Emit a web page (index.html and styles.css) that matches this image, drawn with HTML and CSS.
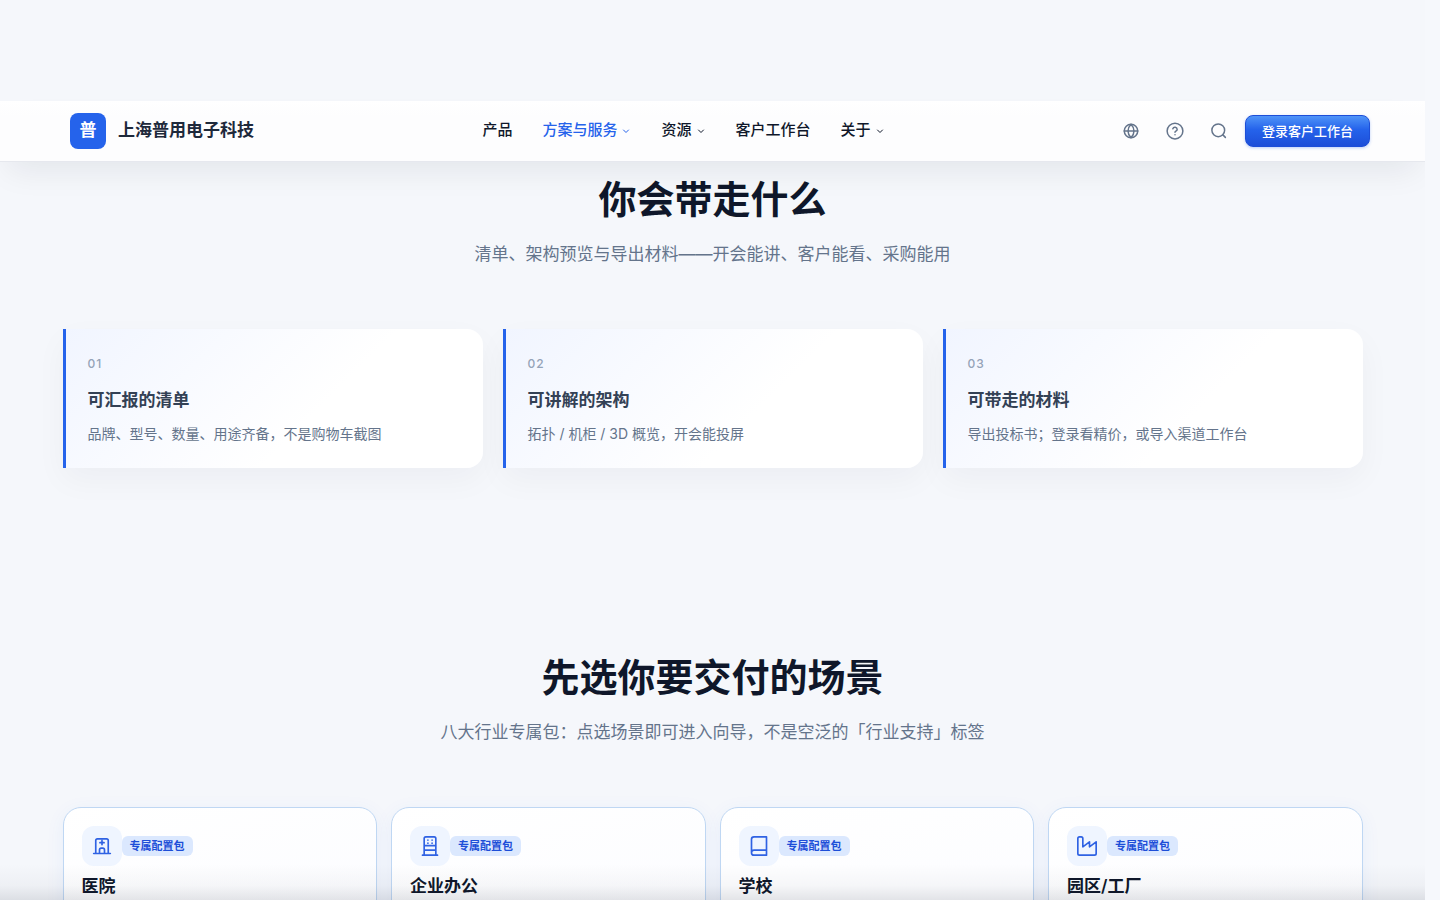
FILE: index.html
```html
<!DOCTYPE html>
<html lang="zh-CN">
<head>
    <meta charset="UTF-8">
    <meta name="viewport" content="width=device-width, initial-scale=1.0">
    <title>上海普用电子科技</title>
    <link rel="stylesheet" href="styles.css">
</head>
<body>
    <div class="page">
        <header class="site-header">
            <a class="brand" href="#">
                <span class="brand-mark">普</span>
                <span class="brand-name">上海普用电子科技</span>
            </a>
            <nav class="main-nav">
                <a href="#">产品</a>
                <a href="#" class="active">方案与服务
                    <svg class="chevron" viewBox="0 0 10 10"><path d="M2.5 4l2.5 2.5L7.500 4"/></svg>
                </a>
                <a href="#">资源
                    <svg class="chevron" viewBox="0 0 10 10"><path d="M2.5 4l2.5 2.5L7.500 4"/></svg>
                </a>
                <a href="#">客户工作台</a>
                <a href="#">关于
                    <svg class="chevron" viewBox="0 0 10 10"><path d="M2.5 4l2.5 2.5L7.500 4"/></svg>
                </a>
            </nav>
            <div class="header-actions">
                <button class="icon-btn" aria-label="语言">
                    <svg width="18" height="18" viewBox="0 0 24 24"><circle cx="12" cy="12" r="9"/><path d="M3 12h18M12 3c2.600 2.700 4 5.700 4 9s-1.400 6.300-4 9c-2.600-2.700-4-5.700-4-9s1.400-6.300 4-9z"/></svg>
                </button>
                <button class="icon-btn" aria-label="帮助">
                    <svg width="18" height="18" viewBox="0 0 24 24"><circle cx="12" cy="12" r="10.500"/><path d="M9.100 9a3 3 0 0 1 5.800 1c0 2-2.900 2.200-2.900 3.500M12 17v.1"/></svg>
                </button>
                <button class="icon-btn" aria-label="搜索">
                    <svg width="18" height="18" viewBox="0 0 24 24"><circle cx="11" cy="11" r="8.500"/><path d="M17.200 17.200L20.500 20.500"/></svg>
                </button>
                <button class="login-btn">登录客户工作台</button>
            </div>
        </header>

        <main>
            <section class="section takeaways">
                <h2>你会带走什么</h2>
                <p class="lead">清单、架构预览与导出材料——开会能讲、客户能看、采购能用</p>
                <div class="step-grid">
                    <article class="step-card">
                        <span class="step-no">01</span>
                        <h3>可汇报的清单</h3>
                        <p>品牌、型号、数量、用途齐备，不是购物车截图</p>
                    </article>
                    <article class="step-card">
                        <span class="step-no">02</span>
                        <h3>可讲解的架构</h3>
                        <p>拓扑 / 机柜 / 3D 概览，开会能投屏</p>
                    </article>
                    <article class="step-card">
                        <span class="step-no">03</span>
                        <h3>可带走的材料</h3>
                        <p>导出投标书；登录看精价，或导入渠道工作台</p>
                    </article>
                </div>
            </section>

            <section class="section scenes">
                <h2>先选你要交付的场景</h2>
                <p class="lead">八大行业专属包：点选场景即可进入向导，不是空泛的「行业支持」标签</p>
                <div class="scene-grid">
                    <a class="scene-card" href="#">
                        <div class="scene-top">
                            <span class="scene-icon">
                                <svg viewBox="0 0 24 24"><path d="M2 21h20M4.500 21V5.500a2 2 0 0 1 2-2h11a2 2 0 0 1 2 2V21M9 21v-4.500a2 2 0 0 1 2-2h2a2 2 0 0 1 2 2V21M12 5.500v5M9.500 8h5"/></svg>
                            </span>
                            <span class="tag">专属配置包</span>
                        </div>
                        <h3>医院</h3>
                    </a>
                    <a class="scene-card" href="#">
                        <div class="scene-top">
                            <span class="scene-icon">
                                <svg viewBox="0 0 24 24"><path d="M3 23h18M5 23V3a2 2 0 0 1 2-2h10a2 2 0 0 1 2 2v20M5 11.500h14M5 17h14M9.500 5v.1M14.500 5v.1M9.500 8.500v.1M14.500 8.500v.1"/></svg>
                            </span>
                            <span class="tag">专属配置包</span>
                        </div>
                        <h3>企业办公</h3>
                    </a>
                    <a class="scene-card" href="#">
                        <div class="scene-top">
                            <span class="scene-icon">
                                <svg viewBox="0 0 24 24"><path d="M3 20V4a3 3 0 0 1 3-3h15v22H6a3 3 0 0 1 0-6h15"/></svg>
                            </span>
                            <span class="tag">专属配置包</span>
                        </div>
                        <h3>学校</h3>
                    </a>
                    <a class="scene-card" href="#">
                        <div class="scene-top">
                            <span class="scene-icon">
                                <svg viewBox="0 0 24 24"><path d="M1 21a2 2 0 0 0 2 2h18a2 2 0 0 0 2-2V7l-8 6V7l-8 6V3a2 2 0 0 0-2-2H3a2 2 0 0 0-2 2z"/></svg>
                            </span>
                            <span class="tag">专属配置包</span>
                        </div>
                        <h3>园区/工厂</h3>
                    </a>
                </div>
            </section>
        </main>
        <div class="bottom-shade"></div>
    </div>
</body>
</html>
```
FILE: styles.css
```css
* {
    box-sizing: border-box;
}

body {
    margin: 0;
    font-family: Inter, "Noto Sans CJK SC", sans-serif;
    background-color: #f6f8fc;
    color: #0f172a;
}

a {
    color: inherit;
    text-decoration: none;
}

h2, h3, p {
    margin: 0;
}

svg {
    fill: none;
    stroke: currentColor;
    stroke-width: 2;
    stroke-linecap: round;
    stroke-linejoin: round;
}

.page {
    position: relative;
    height: 100vh;
    margin-right: 15px;
    padding-top: 101px;
    overflow: hidden;
    background-color: #f5f7fb;
}

/* header */
.site-header {
    position: relative;
    display: flex;
    align-items: center;
    justify-content: space-between;
    height: 61px;
    padding: 0 55px 0 70px;
    background: linear-gradient(#ffffff, #fdfdfe 25%, #fdfdfe);
    border-bottom: 1px solid #e6e8ee;
    box-shadow: 0 16px 32px -8px rgba(15, 23, 42, 0.08);
}

.brand {
    display: flex;
    align-items: center;
    gap: 12px;
}

.brand-mark {
    width: 36px;
    height: 36px;
    border-radius: 8px;
    background-color: #2563eb;
    color: #fff;
    font-size: 17px;
    line-height: 35px;
    font-weight: 700;
    text-align: center;
}

.brand-name {
    padding: 0 4px 2px 0;
    font-size: 17px;
    line-height: 24px;
    font-weight: 600;
    color: #1e293b;
}

.main-nav {
    display: flex;
    gap: 30px;
    padding-bottom: 2px;
    font-size: 15px;
    line-height: 24px;
    font-weight: 500;
}

.main-nav a {
    display: flex;
    align-items: center;
    gap: 4px;
}

.main-nav .active {
    color: #2563eb;
}

.chevron {
    width: 10px;
    height: 10px;
    margin-top: 2px;
    stroke-width: 1;
}

.header-actions {
    display: flex;
    align-items: center;
}

.icon-btn {
    display: flex;
    align-items: center;
    justify-content: center;
    width: 44px;
    height: 44px;
    padding: 0;
    border: none;
    background: none;
    color: #64748b;
    cursor: pointer;
}

.login-btn {
    height: 32px;
    margin-left: 4px;
    padding: 0 16px 2px;
    border: 1px solid #1d4ed8;
    border-radius: 8px;
    background: linear-gradient(#4f94f8, #2563eb 45%, #1d4ed8);
    box-shadow: 0 1px 3px rgba(37, 99, 235, 0.3);
    color: #fff;
    font-family: inherit;
    font-size: 13px;
    font-weight: 500;
    cursor: pointer;
}

/* sections */
.section {
    max-width: 1300px;
    margin: 0 auto;
    padding-top: 14px;
}

.section h2 {
    font-size: 38px;
    line-height: 46px;
    font-weight: 600;
    text-align: center;
}

.lead {
    margin: 18px 0 61px;
    font-size: 17px;
    line-height: 28px;
    color: #64748b;
    text-align: center;
}

.scenes {
    padding-top: 186px;
}

.step-grid {
    display: grid;
    grid-template-columns: repeat(3, 1fr);
    gap: 20px;
}

.step-card {
    padding: 25px 22px 23px;
    border-left: 3px solid #2563eb;
    border-radius: 0 16px 16px 0;
    background: linear-gradient(135deg, #f1f5ff, #ffffff 60%);
    box-shadow: 0 12px 32px rgba(15, 23, 42, 0.04);
}

.step-no {
    display: block;
    font-size: 12px;
    line-height: 20px;
    font-weight: 500;
    letter-spacing: 1px;
    color: #94a3b8;
}

.step-card h3 {
    margin: 13px 0 9px;
    font-size: 17px;
    line-height: 26px;
    font-weight: 600;
    color: #334155;
}

.step-card p {
    font-size: 14px;
    line-height: 23px;
    color: #64748b;
}

.scene-grid {
    display: grid;
    grid-template-columns: repeat(4, 1fr);
    gap: 14px;
}

.scene-card {
    min-height: 180px;
    padding: 18px;
    border: 1px solid #bfd7f3;
    border-radius: 18px;
    background: linear-gradient(165deg, #ffffff, #fafbff);
    box-shadow: 0 4px 20px rgba(37, 99, 235, 0.06);
}

.scene-top {
    display: flex;
    align-items: center;
}

.scene-icon {
    display: flex;
    align-items: center;
    justify-content: center;
    width: 40px;
    height: 40px;
    border-radius: 12px;
    background-color: #eff5ff;
    color: #2f62e3;
}

.scene-icon svg {
    width: 20px;
    height: 20px;
}

.tag {
    padding: 0 8px;
    border-radius: 6px;
    background-color: #dbe8fe;
    color: #1d4ed8;
    font-size: 11px;
    line-height: 20px;
    font-weight: 600;
}

.scene-card h3 {
    margin-top: 7px;
    font-size: 17px;
    line-height: 26px;
    font-weight: 600;
}

.bottom-shade {
    position: absolute;
    left: 0;
    right: 0;
    bottom: 0;
    height: 36px;
    background: linear-gradient(rgba(15, 23, 42, 0), rgba(15, 23, 42, 0.03) 60%, rgba(15, 23, 42, 0.11));
    pointer-events: none;
}
```
